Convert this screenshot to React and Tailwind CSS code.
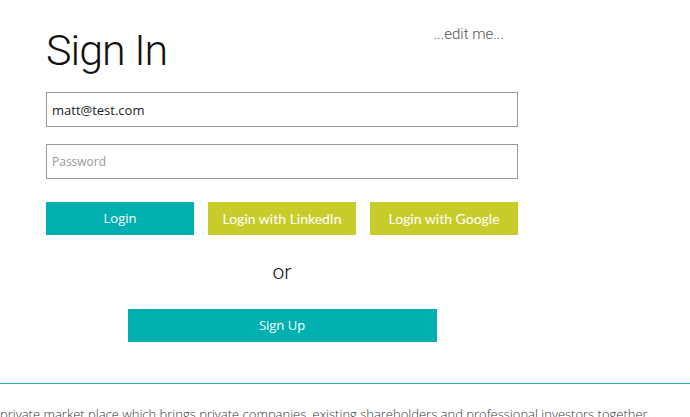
const App = () => {
  return (
    <div className="w-[690px] h-[417px] overflow-hidden bg-white font-['Open_Sans',sans-serif]">
      <div className="pl-[46px] w-[518px]">
        <div className="flex items-start justify-between pt-[22px]">
          <h1 className="text-[43px] leading-[56px] font-light text-[#111] tracking-[-1px] font-['Roboto',sans-serif]">Sign In</h1>
          <span className="mt-[1px] mr-[14px] text-[15px] font-light text-[#555] font-['Roboto',sans-serif]">...edit me...</span>
        </div>
        <input
          className="mt-[14px] block h-[35px] w-full border border-[#9a9a9a] px-[5px] text-[13px] text-[#222] outline-none"
          defaultValue="matt@test.com"
        />
        <input
          className="mt-[17px] block h-[35px] w-full border border-[#9a9a9a] px-[5px] text-[12px] text-[#222] placeholder-[#999] outline-none"
          placeholder="Password"
          type="password"
        />
        <div className="mt-[23px] flex gap-[14px]">
          <button className="h-[33px] w-[148px] bg-[#00b0b0] text-[13px] text-white">Login</button>
          <button className="h-[33px] w-[148px] bg-[#c8cc2b] text-[14px] text-white font-['Lato',sans-serif]">Login with LinkedIn</button>
          <button className="h-[33px] w-[148px] bg-[#c8cc2b] text-[14px] text-white font-['Lato',sans-serif]">Login with Google</button>
        </div>
        <p className="mt-[22px] text-center text-[21px] font-light text-[#111] leading-[30px] font-['Roboto',sans-serif]">or</p>
        <div className="mt-[22px] flex justify-center">
          <button className="h-[33px] w-[309px] bg-[#00b0b0] text-[13px] text-white">Sign Up</button>
        </div>
      </div>
      <div className="mt-[41px] border-t border-[#2aa9b3]" />
      <p className="mt-[20px] whitespace-nowrap text-[13px] font-light text-[#333] leading-[20px]">
        private market place which brings private companies, existing shareholders and professional investors together
      </p>
    </div>
  );
};

export default App;
